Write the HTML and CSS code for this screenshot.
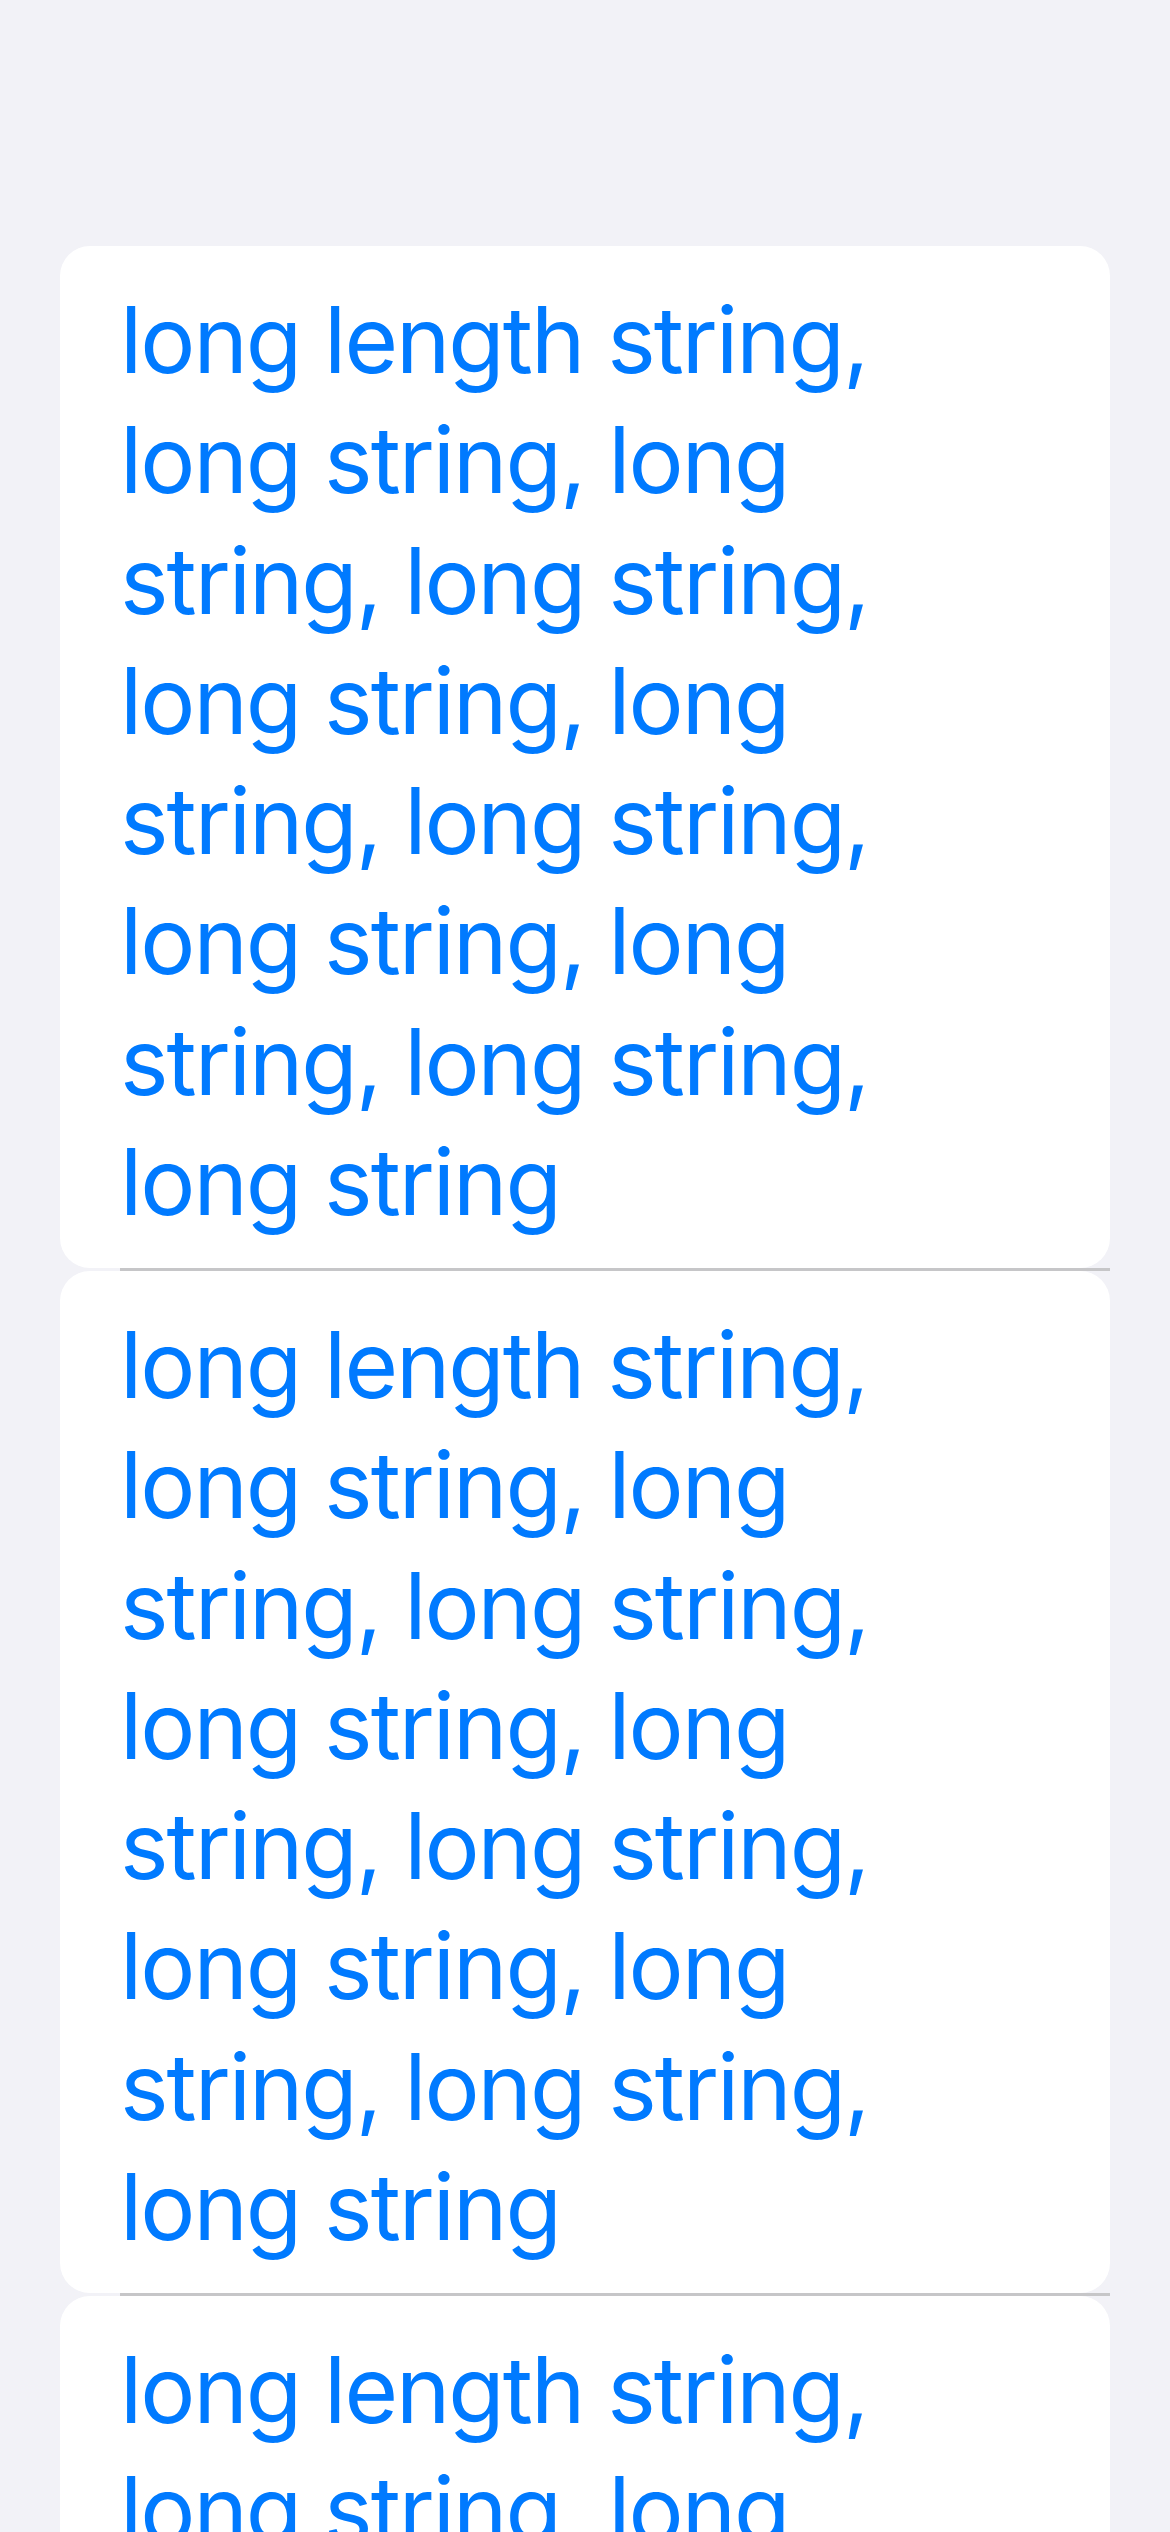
FILE: index.html
```html
<!DOCTYPE html>
<html lang="en">
<head>
<meta charset="utf-8">
<title>List</title>
<link rel="stylesheet" href="styles.css">
</head>
<body>
<main class="list">
  <div class="cell"><p class="label">long length string, long string, long string, long string, long string, long string, long string, long string, long string, long string, long string</p></div>
  <div class="sep"></div>
  <div class="cell"><p class="label">long length string, long string, long string, long string, long string, long string, long string, long string, long string, long string, long string</p></div>
  <div class="sep"></div>
  <div class="cell"><p class="label">long length string, long string, long string, long string, long string, long string, long string, long string, long string, long string, long string</p></div>
  <div class="sep"></div>
</main>
</body>
</html>
```
FILE: styles.css
```css
html, body {
  margin: 0;
  padding: 0;
  background: #F2F2F7;
}
body {
  height: 2532px;
  overflow: hidden;
}
.list {
  display: flex;
  flex-direction: column;
  padding: 246px 60px 0;
}
.cell {
  background: #FFFFFF;
  border-radius: 30px;
  padding: 34px 110px 25.6px 60px;
}
.label {
  margin: 0;
  font-family: Inter, "Noto Sans", sans-serif;
  font-size: 92px;
  line-height: 120.3px;
  color: #007AFF;
  letter-spacing: -2px;
}
.sep {
  height: 3px;
  margin-left: 60px;
  background: #C6C6C8;
}
```
